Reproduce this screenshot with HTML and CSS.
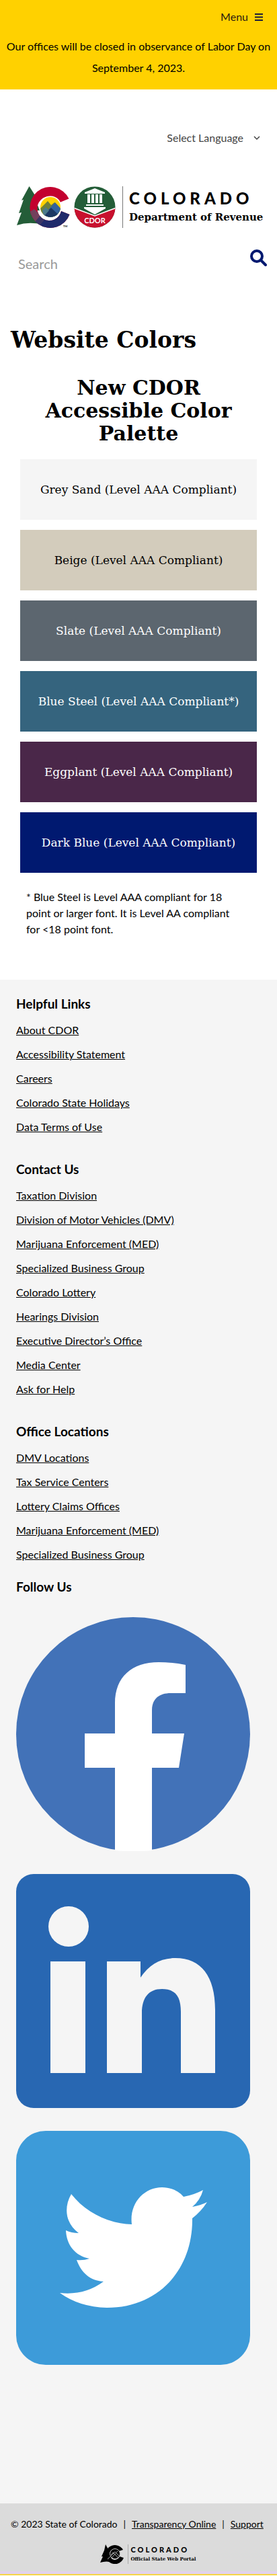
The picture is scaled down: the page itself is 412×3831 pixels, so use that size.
FILE: index.html
```html
<!DOCTYPE html>
<html lang="en">
<head>
<meta charset="utf-8">
<meta name="viewport" content="width=device-width, initial-scale=1">
<title>Website Colors | Department of Revenue</title>
<link rel="stylesheet" href="styles.css">
</head>
<body>
<header>
  <div class="alert">
    <button class="menu" type="button">Menu
      <svg width="12" height="11" viewBox="0 0 12 11" aria-hidden="true"><path d="M0 1h12M0 5.500h12M0 10h12" stroke="#1c1a3c" stroke-width="2"/></svg>
    </button>
    <p class="notice">Our offices will be closed in observance of Labor Day on September 4, 2023.</p>
  </div>
  <div class="language">
    <button type="button">Select Language
      <svg width="10" height="7" viewBox="0 0 10 7" aria-hidden="true"><path d="M1 1l4 4 4-4" fill="none" stroke="currentColor" stroke-width="1.500"/></svg>
    </button>
  </div>
  <a class="brand" href="#">
    <svg class="emblem" viewBox="0 0 147 62" role="img" aria-label="Colorado Department of Revenue emblem">
      <defs>
        <clipPath id="ring"><path d="M77.500 18.500A30.500 30.500 0 1 0 78.500 42L66 37A18 18 0 1 1 64 24Z"/></clipPath>
        <clipPath id="disc"><circle cx="50" cy="31" r="15"/></clipPath>
        <clipPath id="seal"><circle cx="116" cy="31" r="30.500"/></clipPath>
      </defs>
      <path fill="#245d38" d="M18.500 0L30 18 27 18 34 36 30 36 38 57Q18 52 0 58L7 39 3 40 10 20 7 21Z"/>
      <g clip-path="url(#ring)">
        <rect x="18" width="62" height="62" fill="#c3002f"/>
        <path fill="#1f2a6b" d="M24 54L40 38 66 34H80V62H30Z"/>
        <path fill="#73405c" d="M19 38L26 34 37 44 26 54Z"/>
        <path fill="#3b3566" d="M27 53L36 42 43 48 34 58Z"/>
      </g>
      <circle cx="50" cy="31" r="16.500" fill="#fff"/>
      <g clip-path="url(#disc)">
        <rect x="34" y="15" width="32" height="32" fill="#ffd100"/>
        <path fill="#6d7f3a" d="M33 35L46 22 51 28 56 24 68 37V47H33Z"/>
        <path fill="#35629b" d="M44 38L57 24 68 36V47H44Z"/>
        <path fill="#1c3763" d="M35 47L51 32 67 47Z"/>
        <path fill="#4b7a8a" d="M38 36L43 31 48 36 40 45Z"/>
      </g>
      <g clip-path="url(#seal)">
        <rect x="85" width="62" height="62" fill="#245d38"/>
        <path fill="#c8102e" d="M84 32L116 44 148 32V62H84Z"/>
        <path fill="none" stroke="#fff" stroke-width="1.500" d="M84 32L116 44 148 32"/>
      </g>
      <path fill="#fff" d="M116 3L131 9V11H101V9ZM105 12H109V25H105ZM111 12H115V25H111ZM117 12H121V25H117ZM123 12H127V25H123ZM103 27H129V29H103ZM100 31H132V33L116 42 100 33Z"/>
      <text class="seal-text" x="116" y="55" text-anchor="middle">CDOR</text>
      <text class="tm" x="69" y="61">TM</text>
    </svg>
    <span class="brand-text"><span class="state">COLORADO</span><span class="dept">Department of Revenue</span></span>
  </a>
  <form class="search">
    <input type="search" placeholder="Search" aria-label="Search">
    <button type="submit" aria-label="Submit search">
      <svg width="25" height="25" viewBox="0 0 25 25" aria-hidden="true"><circle cx="10" cy="10" r="8" fill="none" stroke="#001970" stroke-width="4"/><path d="M16 16l7 7" stroke="#001970" stroke-width="4" stroke-linecap="round"/></svg>
    </button>
  </form>
</header>
<main>
  <h1>Website Colors</h1>
  <h2>New CDOR Accessible Color Palette</h2>
  <div class="palette">
    <div class="swatch light sand">Grey Sand (Level AAA Compliant)</div>
    <div class="swatch light beige">Beige (Level AAA Compliant)</div>
    <div class="swatch slate">Slate (Level AAA Compliant)</div>
    <div class="swatch steel">Blue Steel (Level AAA Compliant*)</div>
    <div class="swatch eggplant">Eggplant (Level AAA Compliant)</div>
    <div class="swatch navy">Dark Blue (Level AAA Compliant)</div>
  </div>
  <p class="note">* Blue Steel is Level AAA compliant for 18 point or larger font. It is Level AA compliant for &lt;18 point font.</p>
</main>
<footer>
  <div class="links">
    <section>
      <h3>Helpful Links</h3>
      <ul>
        <li><a href="#">About CDOR</a></li>
        <li><a href="#">Accessibility Statement</a></li>
        <li><a href="#">Careers</a></li>
        <li><a href="#">Colorado State Holidays</a></li>
        <li><a href="#">Data Terms of Use</a></li>
      </ul>
    </section>
    <section>
      <h3>Contact Us</h3>
      <ul>
        <li><a href="#">Taxation Division</a></li>
        <li><a href="#">Division of Motor Vehicles (DMV)</a></li>
        <li><a href="#">Marijuana Enforcement (MED)</a></li>
        <li><a href="#">Specialized Business Group</a></li>
        <li><a href="#">Colorado Lottery</a></li>
        <li><a href="#">Hearings Division</a></li>
        <li><a href="#">Executive Director’s Office</a></li>
        <li><a href="#">Media Center</a></li>
        <li><a href="#">Ask for Help</a></li>
      </ul>
    </section>
    <section class="offices">
      <h3>Office Locations</h3>
      <ul>
        <li><a href="#">DMV Locations</a></li>
        <li><a href="#">Tax Service Centers</a></li>
        <li><a href="#">Lottery Claims Offices</a></li>
        <li><a href="#">Marijuana Enforcement (MED)</a></li>
        <li><a href="#">Specialized Business Group</a></li>
      </ul>
    </section>
    <section>
      <h3>Follow Us</h3>
      <div class="social">
        <a href="#" aria-label="Facebook"><svg viewBox="0 0 348 348" aria-hidden="true"><circle cx="174" cy="174" r="174" fill="#4272b8"/><path fill="#fff" d="M147 347V224H102V173H147V128C147 89 172 67 212 67Q232 67 252 71V113H230C212 113 202 122 202 139V173H250L242 224H202V347Q174 350 147 347Z"/></svg></a>
        <a href="#" aria-label="LinkedIn"><svg viewBox="0 0 348 348" aria-hidden="true"><rect width="348" height="348" rx="26" fill="#2867b2"/><circle cx="78" cy="78" r="30" fill="#f5f5f5"/><path fill="#f5f5f5" d="M51 130H103V296H51ZM135 130H185V154C198 135 214 125 237 125C275 125 296 152 296 202V296H245V205C245 182 237 171 217 171C197 171 187 184 187 207V296H135Z"/></svg></a>
        <a href="#" aria-label="Twitter"><svg viewBox="0 0 348 348" aria-hidden="true"><rect width="348" height="348" rx="44" fill="#3d9bd9"/><path fill="#fff" d="M82 94C104 122 138 138 172 139C168 108 190 84 217 84C230 84 241 89 249 98Q265 95 278 88Q274 103 262 113Q274 111 284 106Q275 120 262 130C263 207 211 263 135 263Q94 262 65 241Q102 245 130 224C110 223 97 211 90 192Q100 193 109 190C88 186 75 170 74 148Q82 152 93 152C74 138 70 115 82 94Z"/></svg></a>
      </div>
    </section>
  </div>
  <div class="legal">
    <p>© 2023 State of Colorado<span>|</span><a href="#">Transparency Online</a><span>|</span><a href="#">Support</a></p>
    <a class="portal" href="#">
      <svg viewBox="0 0 36 29" aria-hidden="true"><path d="M8 0L14 11 16 19 19 27Q9 24 0 27L4 18 2 18 6 9Z"/><path d="M34 8A14 14 0 1 0 35 20L29 18A8 8 0 1 1 28 10Z"/><circle cx="22" cy="14" r="7.500" stroke="#bbb"/><path d="M11 22L22 11 29 18M16 16L19 12 27 20M17 20L26 10" fill="none" stroke="#aaa"/></svg>
      <span class="portal-text"><span class="portal-state">COLORADO</span><span class="portal-name">Official State Web Portal</span></span>
    </a>
  </div>
</footer>
</body>
</html>
```

FILE: styles.css
```css
* { box-sizing: border-box; }
body {
  margin: 0;
  background: #fff;
  color: #000;
  font: 16px/24px "Trebuchet MS", Lato, sans-serif;
}
h1, h2, h3, p, ul { margin: 0; padding: 0; }
ul { list-style: none; }
a { color: inherit; }
button, input {
  border: 0;
  background: none;
  padding: 0;
  color: inherit;
  font: inherit;
}
.alert { background: #ffd100; padding: 13px 0 16px; }
.menu { display: flex; align-items: center; gap: 10px; margin: 0 21px 0 auto; color: #2b1a10; }
.notice { margin-top: 16px; line-height: 32px; text-align: center; }
.language { padding: 60px 25px 0 0; }
.language button { display: flex; align-items: center; gap: 15px; margin-left: auto; color: #444; }
.brand { display: flex; gap: 10px; margin: 60px 20px 0 25px; color: #000; text-decoration: none; }
.emblem { width: 147px; height: 62px; flex: none; }
.seal-text { font: bold 11px Lato, sans-serif; fill: #fff; }
.tm { font: bold 4px Lato, sans-serif; }
.brand-text { display: flex; flex-direction: column; padding: 4px 0 0 9px; border-left: 1px solid #777; white-space: nowrap; }
.state { font: 900 24px/28px Lato, sans-serif; letter-spacing: 6px; }
.dept { font: bold 15px/28px "DejaVu Serif", serif; }
.search { display: flex; justify-content: space-between; align-items: flex-start; padding: 32px 15px 0 27px; }
.search input { flex: 1; min-width: 0; height: 42px; font-size: 20px; outline: 0; }
.search input::placeholder { color: #999; opacity: 1; }
.search svg { display: block; }
h1, h2 { font-family: "DejaVu Serif", serif; font-weight: bold; }
h1 { padding: 71px 16px 0; font-size: 33px; line-height: 44px; }
h2 { padding: 32px 60px 0; font-size: 30px; line-height: 34px; text-align: center; }
.palette { display: grid; gap: 15px; padding: 21px 30px 0; }
.swatch { display: flex; align-items: center; justify-content: center; min-height: 90px; color: #fff; font: 17px/24px "DejaVu Serif", serif; text-align: center; }
.light { color: #000; }
.sand { background: #f5f5f5; }
.beige { background: #d3ccbc; }
.slate { background: #5c666f; }
.steel { background: #35647e; }
.eggplant { background: #4a2749; }
.navy { background: #001970; }
.note { padding: 24px 52px 63px 39px; }
.links { padding: 24px 40px 206px 24px; background: #f5f5f5; }
h3 { font-size: 19px; line-height: 24px; }
.links ul { padding: 9px 0 33px; }
.links .offices ul { padding-bottom: 18px; }
.links li { line-height: 36px; }
.social { display: grid; gap: 34px; padding-top: 33px; }
.social a, .social svg { display: block; }
.legal { padding: 19px 16px 15px; background: #dbdbdb; border-bottom: 2px solid #f5d547; box-shadow: inset 0 -4px #e2d3ec; }
.legal p { display: flex; gap: 9px; font-size: 14px; }
.portal { display: flex; justify-content: center; gap: 5px; margin: 18px 0 0 28px; color: #000; text-decoration: none; }
.portal svg { width: 36px; height: 29px; }
.portal-text { display: flex; flex-direction: column; padding-left: 4px; border-left: 1px solid #aaa; }
.portal-state { font: 900 11px/16px Lato, sans-serif; letter-spacing: 3px; }
.portal-name { font: bold 7px/11px "DejaVu Serif", serif; }
```
